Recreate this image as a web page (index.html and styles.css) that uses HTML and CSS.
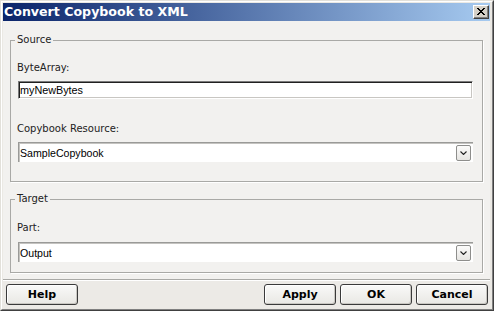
FILE: index.html
```html
<!DOCTYPE html>
<html lang="en">
<head>
    <meta charset="UTF-8">
    <title>Convert Copybook to XML</title>
    <link rel="stylesheet" href="styles.css">
</head>
<body>
    <div class="window">
        <div class="frame">
            <!-- Barra del titolo -->
            <div class="titlebar">
                <span class="title">Convert Copybook to XML</span>
                <span class="close-btn">
                    <svg width="8" height="7" viewBox="0 0 8 7">
                        <path d="M0 0h2v1H0z M6 0h2v1H6z M1 1h2v1H1z M5 1h2v1H5z M2 2h4v1H2z M3 3h2v1H3z M2 4h4v1H2z M1 5h2v1H1z M5 5h2v1H5z M0 6h2v1H0z M6 6h2v1H6z" fill="#000"/>
                    </svg>
                </span>
            </div>

            <div class="content">
                <fieldset class="group source">
                    <legend>Source</legend>
                    <div class="field-label first">ByteArray:</div>
                    <div class="textbox">myNewBytes</div>
                    <div class="field-label second">Copybook Resource:</div>
                    <div class="combo">
                        <span class="combo-value">SampleCopybook</span>
                        <span class="combo-btn">
                            <svg width="7" height="4" viewBox="0 0 7 4"><path d="M0.5 0.5 L3.5 3.5 L6.5 0.5" fill="none" stroke="#222" stroke-width="1.1"/></svg>
                        </span>
                    </div>
                </fieldset>

                <fieldset class="group target">
                    <legend>Target</legend>
                    <div class="field-label first">Part:</div>
                    <div class="combo">
                        <span class="combo-value">Output</span>
                        <span class="combo-btn">
                            <svg width="7" height="4" viewBox="0 0 7 4"><path d="M0.5 0.5 L3.5 3.5 L6.5 0.5" fill="none" stroke="#222" stroke-width="1.1"/></svg>
                        </span>
                    </div>
                </fieldset>
            </div>

            <!-- Pulsanti in basso -->
            <div class="buttonbar">
                <button class="btn">Help</button>
                <span class="spacer"></span>
                <button class="btn">Apply</button>
                <button class="btn">OK</button>
                <button class="btn">Cancel</button>
            </div>
        </div>
    </div>
</body>
</html>
```

FILE: styles.css
```css
body {
    margin: 0;
    background-color: #d4d0c8;
    font-family: "DejaVu Sans", Verdana, sans-serif;
}
.window {
    width: 494px;
    height: 311px;
    box-sizing: border-box;
    border: 1px solid;
    border-color: #e2e0da #404040 #404040 #e2e0da;
}
.frame {
    height: 100%;
    box-sizing: border-box;
    border: 1px solid;
    border-color: #fff #808080 #808080 #fff;
    padding: 1px 2px 1px 1px;
    background-color: #ebe9e4;
    display: flex;
    flex-direction: column;
}
.titlebar {
    height: 18px;
    flex: none;
    display: flex;
    align-items: center;
    background: linear-gradient(to right, #0a246a, #a6caf0);
}
.title {
    flex: 1;
    padding-left: 1px;
    color: white;
    font-weight: bold;
    font-size: 12.6px;
    line-height: 18px;
    white-space: nowrap;
}
.close-btn {
    width: 16px;
    height: 14px;
    margin-right: 1px;
    box-sizing: border-box;
    border: 1px solid;
    border-color: #fff #404040 #404040 #fff;
    box-shadow: inset -1px -1px 0 #808080;
    background-color: #d4d0c8;
    display: flex;
    align-items: center;
    justify-content: center;
    padding-bottom: 1px;
}
.content {
    background-color: #f2f1ef;
    padding-bottom: 6px;
}
.group {
    margin: 0 7px;
    border: 1px solid #a9a9a6;
    box-shadow: 1px 1px 0 #fff;
    padding: 0 9px 0 7px;
    min-width: 0;
}
.group legend {
    margin-left: -3px;
    padding: 0 2px;
    font-size: 10px;
    line-height: 12px;
    color: #222;
}
.source {
    margin-top: 13px;
    padding-bottom: 19px;
}
.target {
    margin-top: 11px;
    padding-bottom: 10px;
}
.field-label {
    margin-left: -1px;
    font-size: 10px;
    line-height: 12px;
    color: #222;
}
.field-label.first {
    margin-top: 16px;
}
.target .field-label.first {
    margin-top: 17px;
}
.field-label.second {
    margin-top: 24px;
}
.textbox {
    margin-top: 7px;
    height: 18px;
    box-sizing: border-box;
    border: 1px solid;
    border-color: #7a7a7a #fff #fff #7a7a7a;
    box-shadow: inset 1px 1px 0 #202020, inset -1px -1px 0 #c8c6c2;
    background-color: white;
    padding-left: 1px;
    font-family: "Liberation Sans", Arial, sans-serif;
    font-size: 10.8px;
    line-height: 16px;
    color: #000;
}
.combo {
    margin-top: 7px;
    height: 20px;
    box-sizing: border-box;
    border-top: 1px solid #9a9a98;
    border-left: 1px solid #9a9a98;
    box-shadow: inset 1px 1px 0 #c4c3c0;
    background-color: white;
    display: flex;
    align-items: center;
    padding: 0 2px 0 1px;
}
.target .combo {
    margin-top: 8px;
}
.combo-value {
    flex: 1;
    font-family: "Liberation Sans", Arial, sans-serif;
    font-size: 10.6px;
    color: #000;
}
.combo-btn {
    width: 15px;
    height: 16px;
    box-sizing: border-box;
    border: 1px solid #8e8e8c;
    border-radius: 2px;
    background: linear-gradient(#fbfbfa, #e6e5e2);
    display: flex;
    align-items: center;
    justify-content: center;
}
.buttonbar {
    flex: 1;
    border-top: 1px solid #a9a9a6;
    box-shadow: inset 0 1px 0 #fff;
    background-color: #eceae6;
    display: flex;
    align-items: flex-start;
    gap: 4px;
    padding: 4px 2px 0 3px;
}
.spacer {
    flex: 1;
}
.btn {
    width: 72px;
    height: 21px;
    margin: 0;
    padding: 0;
    border: 1px solid #3a3a3a;
    border-radius: 3px;
    background: linear-gradient(#f9f9f8, #e9e8e4);
    box-shadow: inset 1px 1px 0 #fff, inset -1px -1px 0 #c9c7c2;
    font-family: "DejaVu Sans", Verdana, sans-serif;
    font-weight: bold;
    font-size: 11px;
    color: #000;
}
```
